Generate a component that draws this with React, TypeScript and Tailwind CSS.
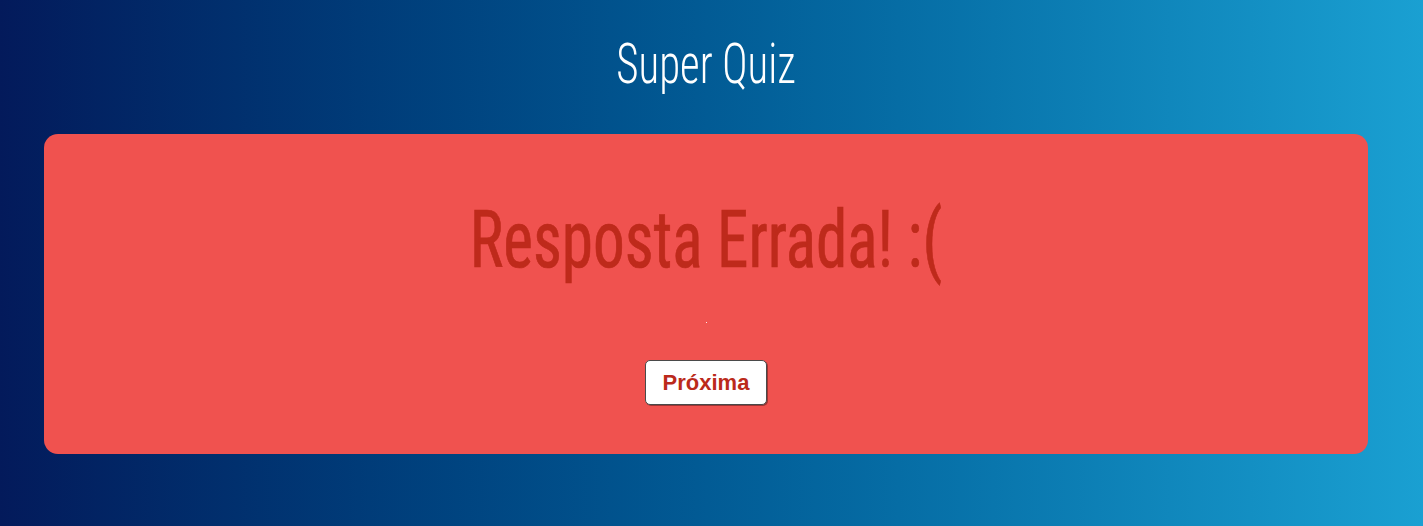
export default function App() {
  return (
    <div className="min-h-[526px] w-full bg-gradient-to-r from-[#031a5b] to-[#1aa0d2] pb-[72px]">
      <div className="flex justify-center pt-[37px] pr-[11px]">
        <h1 className="inline-block scale-x-[0.78] font-['Roboto_Condensed',sans-serif] text-[55px] font-light leading-[55px] text-white">
          Super Quiz
        </h1>
      </div>
      <div className="mt-[42px] ml-[44px] flex h-[320px] w-[1324px] flex-col items-center rounded-[14px] bg-[#f0524f] pt-[66px]">
        <h2 className="inline-block scale-x-[0.79] font-['Roboto_Condensed',sans-serif] text-[80px] font-normal leading-[80px] text-[#be2a1b] [-webkit-text-stroke:0.7px_#be2a1b]">
          Resposta Errada! :(
        </h2>
        <div className="mt-[42px] h-px w-px bg-[#fbe9e8]" />
        <button className="mt-[37px] flex h-[45px] w-[122px] items-center justify-center rounded-[5px] border border-[#4a4a4a] bg-white font-['Liberation_Sans',Arial,sans-serif] text-[22px] font-bold text-[#bb2a1b] shadow-[1px_1px_0_rgba(0,0,0,0.35)]">
          Próxima
        </button>
      </div>
    </div>
  );
}
